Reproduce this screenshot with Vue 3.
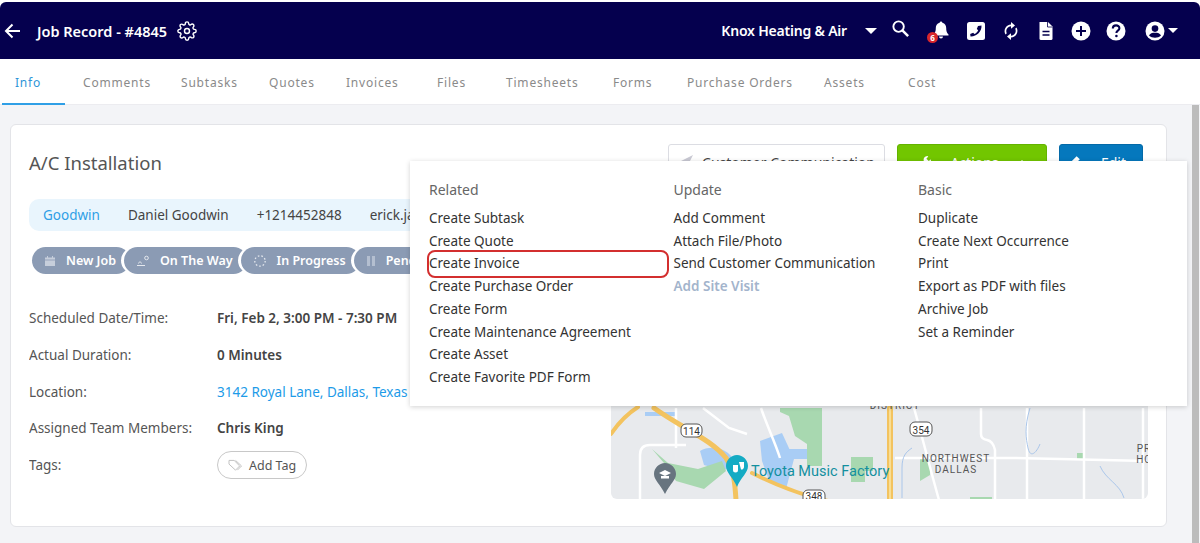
<script setup>
const tabs = [
  { name: 'Info', width: 68 },
  { name: 'Comments', width: 98 },
  { name: 'Subtasks', width: 88 },
  { name: 'Quotes', width: 77 },
  { name: 'Invoices', width: 91 },
  { name: 'Files', width: 69 },
  { name: 'Timesheets', width: 107 },
  { name: 'Forms', width: 74 },
  { name: 'Purchase Orders', width: 137 },
  { name: 'Assets', width: 84 },
  { name: 'Cost', width: 60 }
]

const details = [
  { label: 'Scheduled Date/Time:', value: 'Fri, Feb 2, 3:00 PM - 7:30 PM', kind: 'strong' },
  { label: 'Actual Duration:', value: '0 Minutes', kind: 'strong' },
  { label: 'Location:', value: '3142 Royal Lane, Dallas, Texas 75229', kind: 'link' },
  { label: 'Assigned Team Members:', value: 'Chris King', kind: 'strong' }
]

const menu = [
  {
    title: 'Related',
    items: ['Create Subtask', 'Create Quote', 'Create Invoice', 'Create Purchase Order', 'Create Form', 'Create Maintenance Agreement', 'Create Asset', 'Create Favorite PDF Form']
  },
  {
    title: 'Update',
    items: ['Add Comment', 'Attach File/Photo', 'Send Customer Communication', 'Add Site Visit']
  },
  {
    title: 'Basic',
    items: ['Duplicate', 'Create Next Occurrence', 'Print', 'Export as PDF with files', 'Archive Job', 'Set a Reminder']
  }
]
</script>

<template>
  <div class="page">
    <header class="topbar">
      <svg class="back" viewBox="0 0 20 20" width="20" height="20"><path d="M17 10H3M9.500 3.500 3 10l6.500 6.500" fill="none" stroke="#fff" stroke-width="2"/></svg>
      <h1 class="job-title">Job Record - #4845</h1>
      <svg class="gear" viewBox="0 0 24 24" width="20" height="20" fill="none" stroke="#fff" stroke-width="1.700">
        <circle cx="12" cy="12" r="3"/>
        <path d="M19.400 15a1.650 1.650 0 0 0 .33 1.820l.06.06a2 2 0 0 1 0 2.830 2 2 0 0 1-2.830 0l-.06-.06a1.650 1.650 0 0 0-1.820-.33 1.650 1.650 0 0 0-1 1.510V21a2 2 0 0 1-2 2 2 2 0 0 1-2-2v-.09A1.650 1.650 0 0 0 9 19.400a1.650 1.650 0 0 0-1.820.33l-.06.06a2 2 0 0 1-2.830 0 2 2 0 0 1 0-2.830l.06-.06a1.650 1.650 0 0 0 .33-1.820 1.650 1.650 0 0 0-1.510-1H3a2 2 0 0 1-2-2 2 2 0 0 1 2-2h.09A1.650 1.650 0 0 0 4.600 9a1.650 1.650 0 0 0-.33-1.820l-.06-.06a2 2 0 0 1 0-2.830 2 2 0 0 1 2.830 0l.06.06a1.650 1.650 0 0 0 1.820.33H9a1.650 1.650 0 0 0 1-1.510V3a2 2 0 0 1 2-2 2 2 0 0 1 2 2v.09a1.650 1.650 0 0 0 1 1.510 1.650 1.650 0 0 0 1.820-.33l.06-.06a2 2 0 0 1 2.830 0 2 2 0 0 1 0 2.830l-.06.06a1.650 1.650 0 0 0-.33 1.820V9a1.650 1.650 0 0 0 1.510 1H21a2 2 0 0 1 2 2 2 2 0 0 1-2 2h-.09a1.650 1.650 0 0 0-1.510 1z"/>
      </svg>

      <div class="top-right">
        <span class="company">Knox Heating &amp; Air</span>
        <span class="caret company-caret"></span>
        <svg class="ticon search" viewBox="0 0 20 20" width="19" height="19" fill="none" stroke="#fff" stroke-width="2"><circle cx="8" cy="8" r="5.500"/><path d="m12 12 6 6" stroke-width="2.600"/></svg>
        <span class="bell">
          <svg viewBox="0 0 20 20" width="20" height="20" fill="#fff"><path d="M10 1.500a1.500 1.500 0 0 0-1.400 1.200C6 3.300 4.800 5.400 4.800 8c0 4-1.200 5.300-2.300 6.500v1h15v-1c-1.100-1.200-2.300-2.500-2.300-6.500 0-2.600-1.200-4.700-3.800-5.300A1.500 1.500 0 0 0 10 1.500zM8 16.500a2 2 0 0 0 4 0z"/></svg>
          <span class="badge">6</span>
        </span>
        <svg class="ticon phone" viewBox="0 0 20 20" width="20" height="20"><rect x="1" y="1" width="18" height="18" rx="2.500" fill="#fff"/><path d="M15.500 4.500c.4 6-5 11.300-11 11l-.3-2.600 3-1.200 1.200 1.400c1.700-.9 3-2.200 3.800-3.900l-1.400-1.200 1.200-3z" fill="#05004e"/></svg>
        <svg class="ticon sync" viewBox="0 0 20 20" width="20" height="20" fill="#fff"><path d="M10 3.600V1l4 3.400-4 3.400V5.300a4.800 4.800 0 0 0-4.200 7L4.500 13.600A6.600 6.600 0 0 1 10 3.600zM10 16.400V19l-4-3.400 4-3.400v2.500a4.800 4.800 0 0 0 4.200-7l1.300-1.300A6.600 6.600 0 0 1 10 16.400z"/></svg>
        <svg class="ticon file" viewBox="0 0 20 20" width="20" height="20"><path d="M3.500 1H12l4.500 4.500V17.500A1.500 1.500 0 0 1 15 19H5a1.500 1.500 0 0 1-1.500-1.500z" fill="#fff"/><path d="M6.500 10.500h7M6.500 14h7" stroke="#05004e" stroke-width="1.500"/><path d="M11.500 1v5h5" fill="none" stroke="#05004e" stroke-width=".8"/></svg>
        <svg class="ticon plus" viewBox="0 0 20 20" width="20" height="20"><circle cx="10" cy="10" r="9.500" fill="#fff"/><path d="M10 5v10M5 10h10" stroke="#05004e" stroke-width="2"/></svg>
        <svg class="ticon help" viewBox="0 0 20 20" width="20" height="20"><circle cx="10" cy="10" r="9.500" fill="#fff"/><path d="M6.800 7.600c0-4.300 6.600-4.200 6.600-.3 0 2.500-3 2.300-3 4.600" fill="none" stroke="#05004e" stroke-width="2.100"/><circle cx="10.400" cy="15" r="1.300" fill="#05004e"/></svg>
        <svg class="ticon user" viewBox="0 0 20 20" width="20" height="20"><circle cx="10" cy="10" r="9.500" fill="#fff"/><circle cx="10" cy="7.600" r="3.300" fill="#05004e"/><path d="M4 14.500c1-2.300 3.200-2.800 6-2.800s5 .5 6 2.800c-3 3-9 3-12 0z" fill="#05004e"/></svg>
        <span class="caret user-caret"></span>
      </div>
    </header>

    <nav class="tabs">
      <a
        v-for="(tab, i) in tabs"
        :key="tab.name"
        class="tab"
        :class="{ active: i === 0 }"
        :style="{ width: tab.width + 'px' }"
      >{{ tab.name }}</a>
    </nav>

    <div class="body">
      <main class="content">
        <section class="card">
          <div class="card-head">
            <h2 class="card-title">A/C Installation</h2>
            <div class="actions">
              <button class="btn comm">
                <svg viewBox="0 0 16 16" width="16" height="16"><path d="M15 1 1 8l5 1.500L8 15z" fill="#c9c9d3"/></svg>
                Customer Communication
              </button>
              <button class="btn green">
                <svg viewBox="0 0 16 16" width="15" height="15"><path d="M11 1a4 4 0 0 0-3.800 5.200L1.500 12a1.800 1.800 0 0 0 2.500 2.500l5.800-5.700A4 4 0 0 0 15 4.500l-2.500 2-2.500-2.500 2-2.500z" fill="#fff"/></svg>
                <span class="btn-label">Actions</span>
                <span class="caret up"></span>
              </button>
              <button class="btn blue">
                <svg viewBox="0 0 16 16" width="17" height="17"><path d="M1 14l1-4 8-8 3 3-8 8z" fill="#fff"/></svg>
                <span class="btn-label">Edit</span>
              </button>
            </div>
          </div>

          <div class="card-grid">
            <div class="info">
              <div class="contact">
                <a class="contact-link">Goodwin</a>
                <span>Daniel Goodwin</span>
                <span>+1214452848</span>
                <span>erick.jacobs@example.com</span>
              </div>

              <div class="stages">
                <span class="stage">
                  <svg viewBox="0 0 12 12" width="12" height="12" fill="#c6cedb"><path d="M1 2.500h10V11H1zM3 1h1v2H3zM8 1h1v2H8z"/><path d="M1 5h10" stroke="#8b9bb4" stroke-width=".8"/></svg>
                  New Job
                </span>
                <span class="stage">
                  <svg viewBox="0 0 14 12" width="14" height="12" fill="none" stroke="#e4e8ee" stroke-width="1"><circle cx="10.500" cy="3" r="1.800"/><path d="M1 10.500h8M2.500 8.500c0-2 3-2 3 0"/></svg>
                  On The Way
                </span>
                <span class="stage">
                  <svg viewBox="0 0 14 14" width="14" height="14" fill="none" stroke="#e4e8ee" stroke-width="1.300" stroke-dasharray="1.600 2"><circle cx="7" cy="7" r="5.200"/></svg>
                  In Progress
                </span>
                <span class="stage">
                  <svg viewBox="0 0 10 12" width="10" height="12" fill="#b4bfd0"><path d="M1 1h3v10H1zM6 1h3v10H6z"/></svg>
                  Pending
                </span>
              </div>

              <dl class="details">
                <div v-for="row in details" :key="row.label" class="detail">
                  <dt>{{ row.label }}</dt>
                  <dd :class="row.kind">{{ row.value }}</dd>
                </div>
                <div class="detail">
                  <dt>Tags:</dt>
                  <dd>
                    <button class="tag">
                      <svg viewBox="0 0 16 14" width="15" height="13" fill="none" stroke="#bdbdbd" stroke-width="1"><path d="M1 1.500h5.500l6 6-4.500 4.500-7-6.500zM8 1.500l6.500 6L10 12"/></svg>
                      Add Tag
                    </button>
                  </dd>
                </div>
              </dl>
            </div>

            <svg class="map" viewBox="611 198 537 300" width="537" height="300">
              <rect x="611" y="198" width="537" height="300" fill="#e8eaed"/>
              <g fill="#a9cdf5">
                <path d="M760 440l22 -8 12 26-8 30-16-6-8-22z"/>
                <path d="M700 450c10-6 28-4 34 10l-10 10-20-6z"/>
                <path d="M645 411h30v4h-30z"/>
                <path d="M783 448h28v10h-28z"/>
              </g>
              <g fill="#a8d8b0">
                <path d="M780 407h42v58h-15v-22l-12-8-6-20-9-4z"/>
                <path d="M851 456h22v14h-8v11h-14z"/>
                <path d="M920 458h10v16l-10 6z"/>
                <path d="M652 448l16 14 30 6 24-8 4 10-22 18-28-8-12-18z"/>
                <path d="M1077 452h6v6h-6z"/>
                <path d="M970 496h22v4h-22z"/>
              </g>
              <g fill="none" stroke="#fff" stroke-width="2.500">
                <path d="M895 457h120l132 3"/>
                <path d="M981 407v26q0 5 6 6t8 10v50"/>
                <path d="M1027 407v92M1084 407v92M1143 407v92"/>
                <path d="M914 407c8 28 16 60 25 92"/>
                <path d="M761 407c6 18 14 34 19 50"/>
                <path d="M640 498v-44q0-10 10-10h36"/>
                <path d="M676 407v40M703 407l26 20 18 6"/>
              </g>
              <g fill="none" stroke="#aac6ea" stroke-width="1">
                <path d="M1030 407c-6 20-4 30-2 40s8 6 12-4"/>
                <path d="M1100 465c6 14 20 18 24 32"/>
                <path d="M912 447c-6 4-10 8-10 20v30"/>
              </g>
              <g fill="none" stroke-linecap="round">
                <path d="M611 433c8-12 16-20 27-27" stroke="#f3c35f" stroke-width="4"/>
                <path d="M654 407c28 20 58 32 72 50 8 12 9 26 10 42" stroke="#f3c35f" stroke-width="5"/>
                <path d="M752 472c20 10 50 22 76 28" stroke="#f3c35f" stroke-width="4"/>
                <path d="M890 407v92" stroke="#f3c35f" stroke-width="6"/>
                <path d="M890 407v92" stroke="#fbe7a6" stroke-width="1.500"/>
              </g>
              <g class="shield">
                <rect x="681" y="423" width="21" height="13" rx="5"/>
                <rect x="910" y="421" width="22" height="14" rx="5"/>
                <rect x="803" y="489" width="22" height="14" rx="5"/>
              </g>
              <g class="shield-text">
                <text x="691.500" y="433.500">114</text>
                <text x="921" y="432.500">354</text>
                <text x="814" y="499">348</text>
              </g>
              <g class="area-text">
                <text x="956" y="461">NORTHWEST</text>
                <text x="956" y="472">DALLAS</text>
                <text x="1144" y="451">PR</text>
                <text x="1144" y="462">HC</text>
                <text x="895" y="408">DISTRICT</text>
              </g>
              <path d="M665 462c6 0 11 5 11 11 0 6-6 10-11 20-5-10-11-14-11-20 0-6 5-11 11-11z" fill="#67747f"/>
              <path d="M659 472l6-3 6 3-6 3zM661 475v2.500h8V475" fill="#fff"/>
              <path d="M737 454c6 0 11 5 11 11 0 7-7 11-11 21-4-10-11-14-11-21 0-6 5-11 11-11z" fill="#14abc4"/>
              <path d="M733 464h5v5a2.500 2.500 0 0 1-5 0zM739 461h5v5a2.500 2.500 0 0 1-3 2.400z" fill="#fff"/>
              <text class="poi" x="751" y="475">Toyota Music Factory</text>
            </svg>
          </div>

          <div class="dropdown">
            <div v-for="col in menu" :key="col.title" class="menu-col">
              <h3>{{ col.title }}</h3>
              <a
                v-for="item in col.items"
                :key="item"
                class="menu-item"
                :class="{ faded: item === 'Add Site Visit' }"
              >{{ item }}</a>
            </div>
            <span class="highlight"></span>
          </div>
        </section>
      </main>
      <div class="scrollbar"><span class="thumb"></span></div>
    </div>
  </div>
</template>

<style>
html, body {
  margin: 0;
  background: #fff;
}
</style>

<style scoped>
.page {
  width: 1200px;
  height: 543px;
  overflow: hidden;
  display: flex;
  flex-direction: column;
  font-family: "Noto Sans", sans-serif;
  color: #444;
  padding-top: 2px;
  box-sizing: border-box;
}

.topbar {
  height: 57px;
  flex: none;
  background: #05004e;
  border-radius: 6px 6px 0 0;
  display: flex;
  align-items: center;
  color: #fff;
  padding-left: 3px;
}
.back { margin-right: 14px; }
.job-title {
  font-size: 14.5px;
  font-weight: 600;
  margin: 0 10px 0 0;
}
.top-right {
  margin-left: auto;
  display: flex;
  align-items: center;
  padding-right: 22px;
}
.company {
  font-size: 14px;
  font-weight: 600;
  margin-right: 18px;
  letter-spacing: -0.2px;
}
.caret {
  width: 0;
  height: 0;
  border-left: 6px solid transparent;
  border-right: 6px solid transparent;
  border-top: 6px solid #fff;
}
.company-caret { margin-right: 14px; }
.ticon { margin-left: 15px; }
.search { margin: -4px 0 0 0; }
.bell {
  position: relative;
  display: flex;
  margin: -2px 0 0 21px;
}
.badge {
  position: absolute;
  left: -4px;
  bottom: -3px;
  width: 11px;
  height: 11px;
  border-radius: 50%;
  background: #d8262c;
  font-size: 8px;
  line-height: 11px;
  text-align: center;
  font-weight: 700;
}
.phone { margin-left: 15px; }
.user { margin-left: 19px; }
.user-caret {
  margin-left: 3px;
  border-left-width: 5px;
  border-right-width: 5px;
  border-top-width: 5px;
}

.tabs {
  height: 46px;
  flex: none;
  display: flex;
  align-items: stretch;
  background: #fff;
  padding-left: 2px;
  border-bottom: 1px solid #ececf0;
  box-sizing: border-box;
}
.tab {
  position: relative;
  box-sizing: border-box;
  padding: 15px 0 0 13px;
  font-size: 12px;
  letter-spacing: 0.8px;
  color: #8a8a8a;
  white-space: nowrap;
}
.tab.active { color: #2f96d8; }
.tab.active::after {
  content: "";
  position: absolute;
  left: 0;
  bottom: -1px;
  width: 63px;
  height: 2px;
  background: #2f9fe6;
}

.body {
  flex: 1;
  display: flex;
  min-height: 0;
  background: #f3f4f7;
}
.content {
  flex: 1;
  padding: 19px 23px 0 10px;
}
.scrollbar {
  width: 10px;
  flex: none;
  display: flex;
  justify-content: center;
}
.thumb {
  width: 7px;
  height: 100%;
  background: #bcbcbc;
}

.card {
  position: relative;
  height: 403px;
  box-sizing: border-box;
  background: #fff;
  border: 1px solid #e3e4e8;
  border-radius: 6px;
  padding: 19px 18px 0 18px;
}
.card-head {
  display: flex;
  justify-content: space-between;
  align-items: flex-start;
}
.card-title {
  margin: 6px 0 0;
  font-size: 18.500px;
  font-weight: 400;
  color: #555;
}
.actions {
  display: flex;
  gap: 12px;
  padding-right: 5px;
}
.btn {
  height: 36px;
  display: flex;
  align-items: center;
  justify-content: center;
  gap: 8px;
  border-radius: 3px;
  font: 400 14px "Noto Sans", sans-serif;
  padding: 0;
}
.comm {
  width: 217px;
  background: #fff;
  border: 1px solid #dcdde3;
  color: #444;
}
.green {
  width: 150px;
  background: #72c600;
  border: 1px solid #64b300;
  color: #fff;
}
.blue {
  width: 84px;
  background: #0578bd;
  border: 1px solid #046aa8;
  color: #fff;
}
.btn-label { margin: 0 10px; }
.caret.up {
  transform: rotate(180deg);
  border-left-width: 5px;
  border-right-width: 5px;
  border-top-width: 5px;
}

.card-grid {
  position: relative;
  display: flex;
  justify-content: space-between;
  margin-top: 19px;
}
.info {
  width: 560px;
  overflow: hidden;
  flex: none;
}
.contact {
  height: 32px;
  background: #e9f5fd;
  border-radius: 10px;
  display: flex;
  align-items: center;
  gap: 28px;
  padding-left: 14px;
  font-size: 13.500px;
  white-space: nowrap;
}
.contact-link { color: #2f9fe6; }

.stages {
  display: flex;
  margin: 16px 0 0 3px;
}
.stage {
  height: 27px;
  box-sizing: border-box;
  display: flex;
  align-items: center;
  gap: 10px;
  background: #8b9bb4;
  color: #fff;
  font-size: 12.500px;
  font-weight: 600;
  border-radius: 14px;
  padding: 0 14px 0 12px;
  margin-right: -6px;
  white-space: nowrap;
  box-shadow: -3px 0 0 #fff;
}

.details {
  margin: 26px 0 0;
}
.detail {
  display: flex;
  align-items: center;
  height: 36.700px;
  font-size: 13.500px;
}
.detail dt {
  width: 188px;
  flex: none;
  color: #555;
}
.detail dd {
  margin: 0;
  white-space: nowrap;
}
.strong {
  font-weight: 600;
  color: #444;
}
.link { color: #1d9be8; }
.tag {
  height: 28px;
  display: flex;
  align-items: center;
  gap: 6px;
  padding: 0 10px;
  background: #fff;
  border: 1px solid #c8c8c8;
  border-radius: 14px;
  font: 400 12.500px "Noto Sans", sans-serif;
  color: #555;
}

.map {
  flex: none;
  margin-left: auto;
  border-radius: 0 0 6px 6px;
  margin-top: 0;
  margin-right: 0;
}
.shield rect {
  fill: #fff;
  stroke: #555;
  stroke-width: 1;
}
.shield-text text {
  font: 400 10px Roboto, sans-serif;
  fill: #333;
  text-anchor: middle;
}
.area-text text {
  font: 400 10px Roboto, sans-serif;
  letter-spacing: 1px;
  fill: #555;
  text-anchor: middle;
}
.poi {
  font: 400 14.500px Roboto, sans-serif;
  fill: #13909f;
}

.dropdown {
  position: absolute;
  left: 399px;
  top: 36px;
  width: 777px;
  height: 245px;
  box-sizing: border-box;
  background: #fff;
  box-shadow: 0 1px 5px rgba(0, 0, 0, 0.18);
  padding: 19px 0 0 19px;
  display: grid;
  grid-template-columns: 244.500px 244.500px 1fr;
}
.menu-col {
  display: flex;
  flex-direction: column;
}
.menu-col h3 {
  margin: 0 0 8px;
  font-size: 14px;
  line-height: 19px;
  font-weight: 400;
  color: #666;
}
.menu-item {
  font-size: 13.500px;
  line-height: 22.700px;
  color: #333;
  white-space: nowrap;
}
.menu-item.faded {
  color: #a3b4cc;
  font-weight: 600;
}
.highlight {
  position: absolute;
  left: 17px;
  top: 89px;
  width: 242px;
  height: 28px;
  box-sizing: border-box;
  border: 2.500px solid #d32f2f;
  border-radius: 8px;
}
</style>
